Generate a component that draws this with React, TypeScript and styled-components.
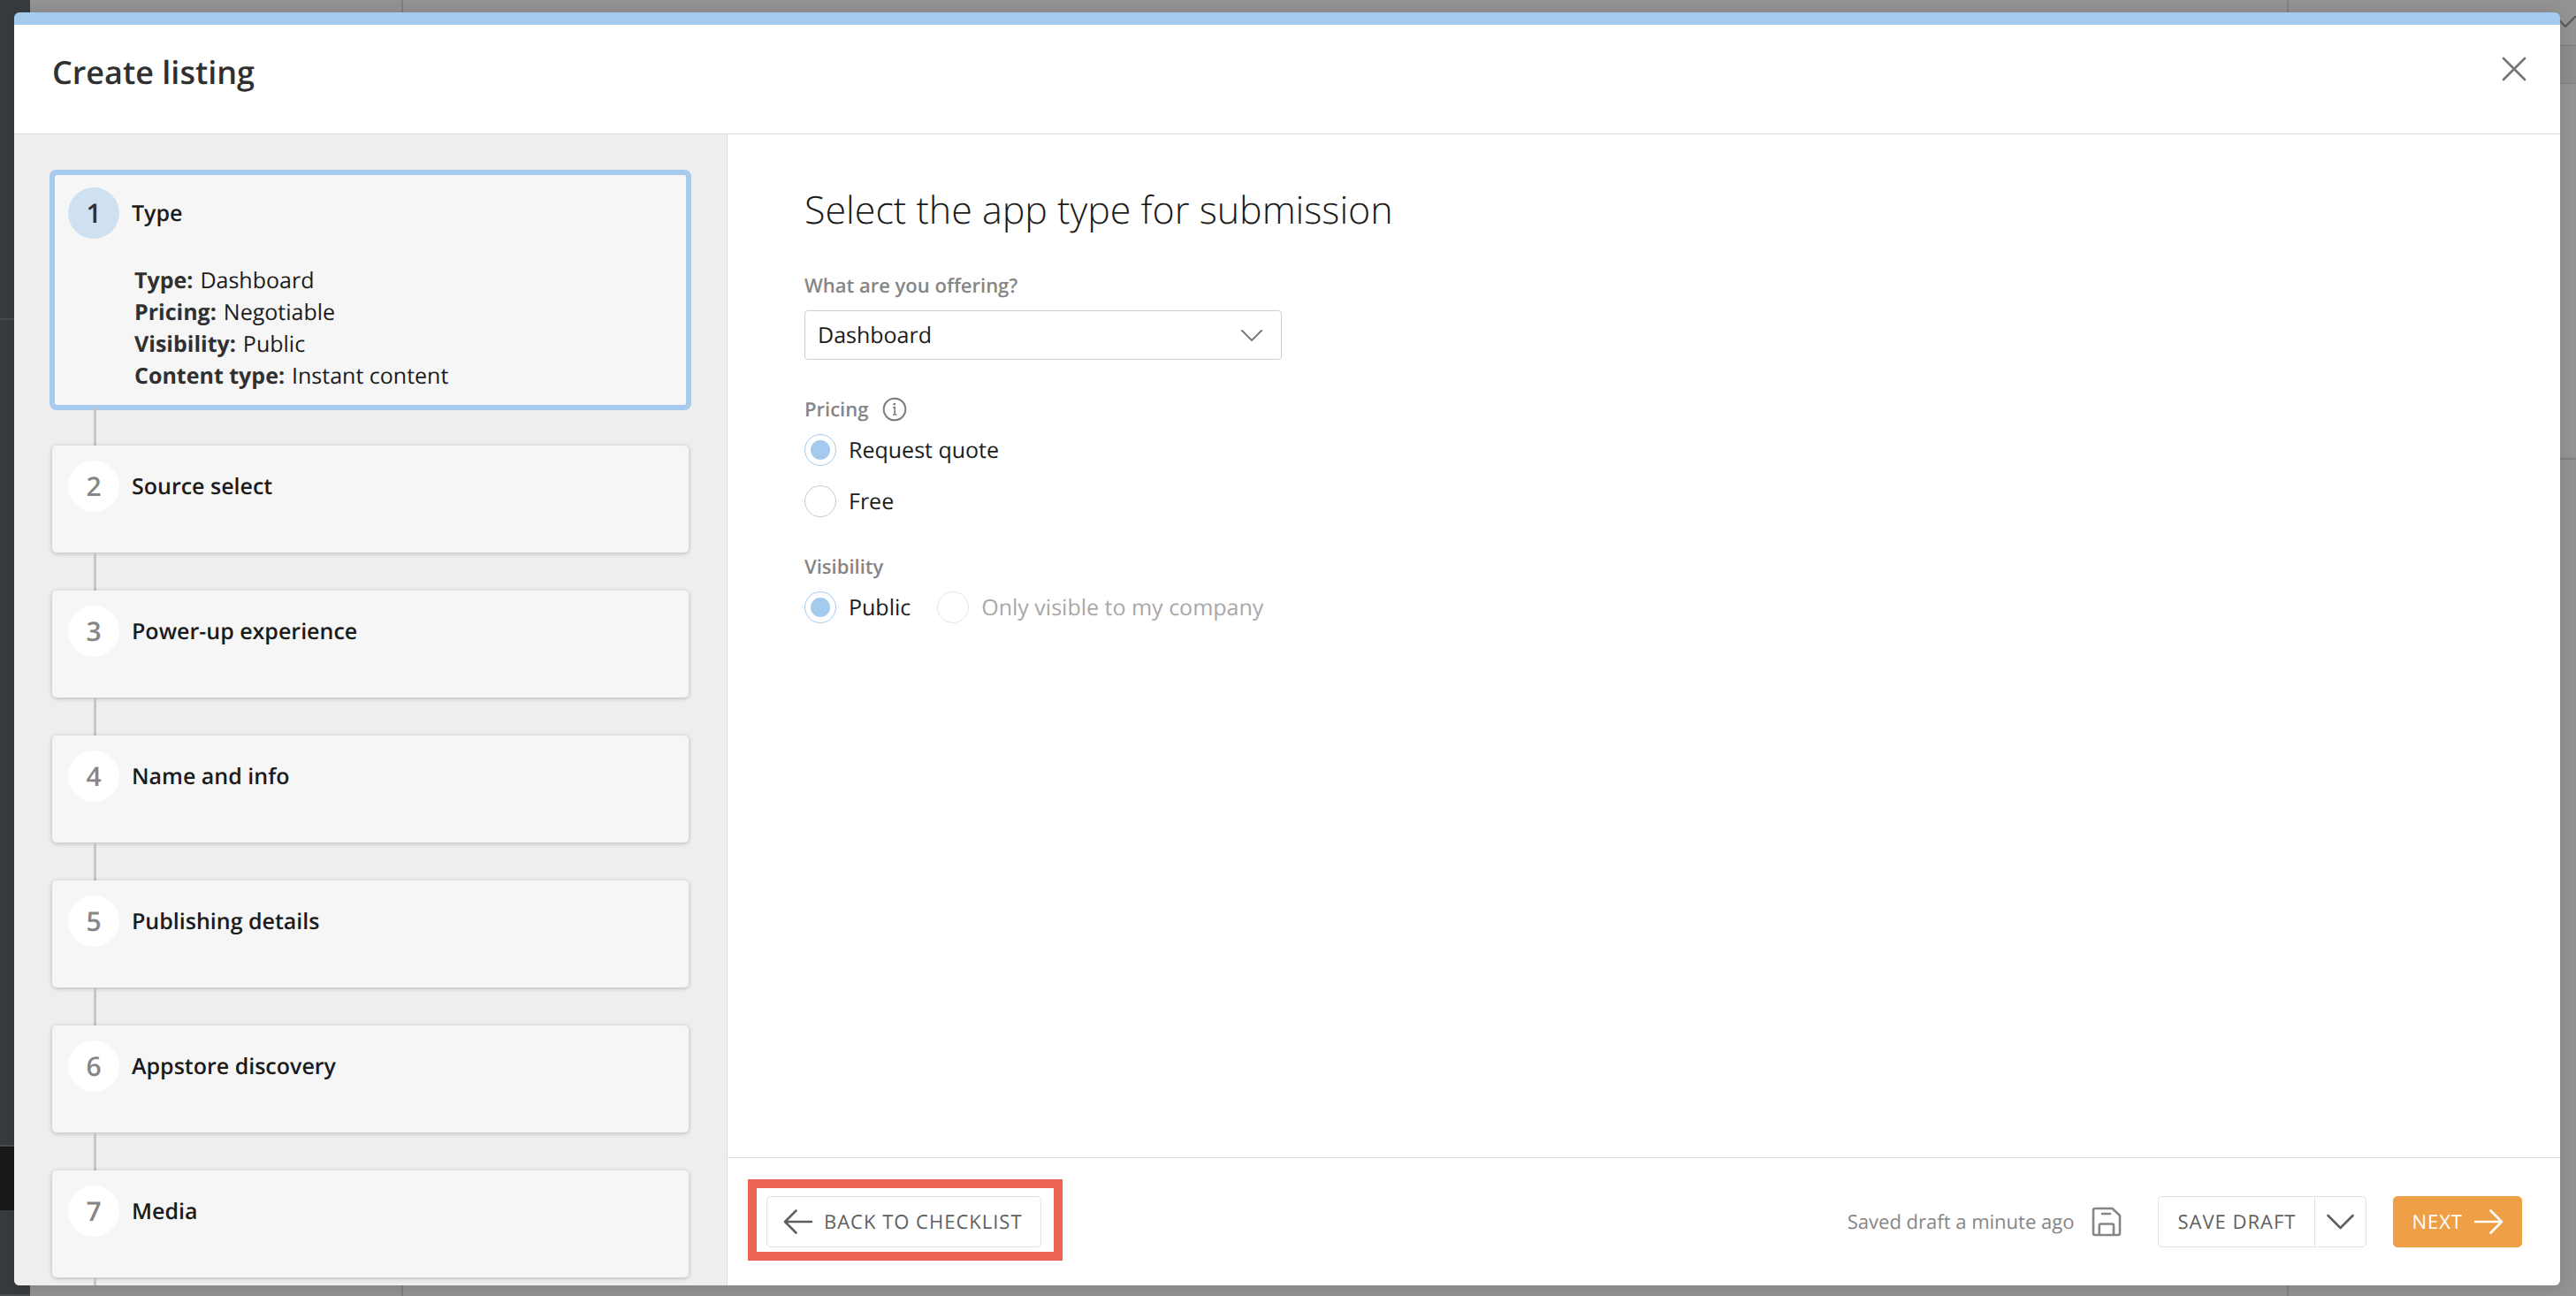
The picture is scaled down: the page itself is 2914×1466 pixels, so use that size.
import React, { useState } from "react";
import styled, { createGlobalStyle, css } from "styled-components";

const color = {
  accent: "#a4caed",
  accentSoft: "#cfe1f1",
  text: "#1b1b1b",
  strong: "#303030",
  muted: "#868686",
  button: "#606060",
  line: "#dcdcdc",
  orange: "#ef9f46",
  highlight: "#ec6453",
};

const GlobalStyle = createGlobalStyle`
  *, *::before, *::after { box-sizing: border-box; }
  body {
    margin: 0;
    font-family: "Open Sans", "Noto Sans", sans-serif;
    font-size: 25px;
    line-height: 36px;
    text-rendering: geometricPrecision;
    color: ${color.text};
  }
  button, select, input { font: inherit; color: inherit; margin: 0; text-rendering: inherit; }
  h1, h2, h3, p, dl, dd, ol, fieldset { margin: 0; padding: 0; }
`;

/* Dimmed page behind the dialog */

const Page = styled.div`
  position: relative;
  display: flex;
  height: 100vh;
  overflow: hidden;
  background: #949494;
`;

const NavRail = styled.div`
  width: 34px;
  display: flex;
  flex-direction: column;
  background: #383c3f;
`;

const NavSection = styled.div<{ $grow: number }>`
  flex: ${(p) => p.$grow} 0 0;
  border-bottom: 2px solid #4a4e51;
`;

const NavCurrent = styled.div`
  height: 72px;
  background: #191919;
`;

const ListPane = styled.div`
  width: 422px;
  border-right: 2px solid #7f7f7f;
`;

const ContentPane = styled.div`
  flex: 1;
`;

const SidePane = styled.div`
  width: 327px;
  border-left: 2px solid #828282;
  display: flex;
  flex-direction: column;
  align-items: flex-end;
`;

const PaneBar = styled.div`
  width: 100%;
  height: 52px;
  border-bottom: 1px solid #7b7b7b;
  display: flex;
  justify-content: flex-end;
  align-items: center;
  padding-bottom: 4px;
  color: #5c5c5c;
`;

const PaneTools = styled.div`
  width: 100%;
  height: 43px;
  background: #8e8e8e;
  border-bottom: 1px solid #868686;
`;

const PaneCard = styled.div`
  width: 100%;
  height: 425px;
  background: #969696;
  border-bottom: 2px solid #828282;
`;

/* Dialog */

const Overlay = styled.div`
  position: absolute;
  inset: 0;
  display: flex;
  padding: 14px 18px 12px 16px;
`;

const Dialog = styled.section`
  flex: 1;
  min-width: 0;
  display: flex;
  flex-direction: column;
  overflow: hidden;
  border-top: 14px solid ${color.accent};
  border-radius: 6px;
  background: #fff;
  box-shadow: 0 2px 24px rgba(0, 0, 0, 0.14);
`;

const Header = styled.header`
  display: flex;
  justify-content: space-between;
  align-items: flex-start;
  padding: 28px 36px 45px 43px;
  border-bottom: 1px solid ${color.line};
`;

const Title = styled.h1`
  padding-top: 2px;
  font-size: 36px;
  line-height: 48px;
  font-weight: 600;
  color: ${color.strong};
`;

const CloseButton = styled.button`
  display: flex;
  padding: 6px 0;
  border: 0;
  background: none;
  color: #757575;
  cursor: pointer;
`;

const Body = styled.div`
  flex: 1;
  min-height: 0;
  display: flex;
`;

/* Steps */

const Sidebar = styled.nav`
  flex: 0 0 807px;
  overflow: hidden;
  padding: 43px 43px 0;
  background: #eeeeee;
  border-right: 1px solid ${color.line};
`;

const StepList = styled.ol`
  list-style: none;
`;

const StepCard = styled.div<{ $active: boolean }>`
  min-height: 121px;
  padding: 17px 18px 18px;
  border-radius: 5px;
  background: #f6f6f6;
  box-shadow: 0 1px 5px rgba(0, 0, 0, 0.24);
  ${(p) =>
    p.$active &&
    css`
      box-shadow: 0 0 0 3px ${color.accent}, inset 0 0 0 3px ${color.accent};
    `}
`;

const StepButton = styled.button`
  display: flex;
  align-items: center;
  gap: 14px;
  width: 100%;
  padding: 0;
  border: 0;
  background: none;
  text-align: left;
  font-weight: 600;
  cursor: pointer;
`;

const StepNumber = styled.span<{ $active: boolean }>`
  display: flex;
  align-items: center;
  justify-content: center;
  width: 58px;
  height: 58px;
  border-radius: 50%;
  font-size: 30px;
  background: ${(p) => (p.$active ? color.accentSoft : "#fff")};
  color: ${(p) => (p.$active ? color.strong : color.muted)};
`;

const Connector = styled.div`
  width: 3px;
  height: 43px;
  margin-left: 47px;
  background: #c6c6c6;
`;

const Summary = styled.dl`
  margin: 29px 0 0 75px;
`;

const SummaryRow = styled.div`
  display: flex;
  gap: 8px;
`;

const Term = styled.dt`
  font-weight: 700;
  color: ${color.strong};
`;

/* Form */

const Main = styled.main`
  flex: 1;
  min-width: 0;
  display: flex;
  flex-direction: column;
`;

const Form = styled.form`
  flex: 1;
  display: flex;
  flex-direction: column;
  align-items: flex-start;
  gap: 41px;
  padding: 55px 87px;
`;

const FormTitle = styled.h2`
  font-size: 43px;
  line-height: 60px;
  font-weight: 300;
`;

const Field = styled.div`
  display: flex;
  flex-direction: column;
  gap: 13px;
`;

const FieldLabel = styled.label`
  font-size: 22px;
  line-height: 30px;
  font-weight: 600;
  color: ${color.muted};
`;

const LabelRow = styled.div`
  display: flex;
  align-items: center;
  gap: 16px;
  height: 30px;
`;

const InfoButton = styled.button`
  display: flex;
  padding: 0;
  border: 0;
  background: none;
  color: #7b7b7b;
  cursor: pointer;
`;

const SelectBox = styled.div`
  position: relative;
  width: 540px;
`;

const Select = styled.select`
  appearance: none;
  display: block;
  width: 100%;
  height: 56px;
  padding: 0 60px 0 14px;
  border: 1px solid #cfcfcf;
  border-radius: 4px;
  background: #fff;
`;

const SelectArrow = styled.span`
  position: absolute;
  right: 22px;
  top: 22px;
  display: flex;
  color: #7b7b7b;
  pointer-events: none;
`;

const Options = styled.div<{ $inline?: boolean }>`
  display: flex;
  flex-direction: ${(p) => (p.$inline ? "row" : "column")};
  gap: ${(p) => (p.$inline ? "30px" : "22px")};
`;

const Option = styled.label<{ $disabled?: boolean }>`
  display: flex;
  align-items: center;
  gap: 14px;
  color: ${(p) => (p.$disabled ? "#a8a8a8" : color.text)};
`;

const Radio = styled.input`
  appearance: none;
  width: 36px;
  height: 36px;
  border: 1px solid #c9c9c9;
  border-radius: 50%;
  display: grid;
  place-items: center;

  &:checked {
    border-color: ${color.accent};
  }
  &:checked::before {
    content: "";
    width: 22px;
    height: 22px;
    border-radius: 50%;
    background: ${color.accent};
  }
  &:disabled {
    border-color: #e6e6e6;
  }
`;

/* Footer */

const Footer = styled.footer`
  display: flex;
  align-items: center;
  justify-content: space-between;
  height: 145px;
  padding: 0 43px 0 44px;
  border-top: 1px solid ${color.line};
`;

const Button = styled.button<{ $primary?: boolean }>`
  display: flex;
  align-items: center;
  gap: 12px;
  height: 58px;
  padding: 0 20px;
  border: 1px solid ${(p) => (p.$primary ? color.orange : "#e2e2e2")};
  border-radius: 5px;
  background: ${(p) => (p.$primary ? color.orange : "#fff")};
  color: ${(p) => (p.$primary ? "#fff" : color.button)};
  font-size: 22px;
  line-height: 30px;
  font-weight: 500;
  letter-spacing: 1px;
  white-space: nowrap;
  cursor: pointer;
`;

const Highlight = styled.div`
  position: relative;

  ${Button} {
    padding: 0 20px 0 18px;
  }

  &::after {
    content: "";
    position: absolute;
    inset: -19px -24px -15px -21px;
    border: 10px solid ${color.highlight};
    pointer-events: none;
  }
`;

const Actions = styled.div`
  display: flex;
  align-items: center;
`;

const DraftStatus = styled.p`
  display: flex;
  align-items: center;
  gap: 20px;
  margin-right: 41px;
  font-size: 22px;
  line-height: 30px;
  color: ${color.muted};
`;

const SplitButton = styled.div`
  display: flex;
  margin-right: 30px;

  ${Button}:first-child {
    padding: 0 21px;
    border-right: 0;
    border-radius: 5px 0 0 5px;
  }
  ${Button}:last-child {
    padding: 0 13px;
    border-radius: 0 5px 5px 0;
  }
`;

type StrokeProps = {
  width: number;
  height: number;
  d: string;
  stroke?: number;
};

const Stroke = ({ width, height, d, stroke = 2 }: StrokeProps) => (
  <svg
    width={width}
    height={height}
    viewBox={`0 0 ${width} ${height}`}
    fill="none"
    stroke="currentColor"
    strokeWidth={stroke}
    strokeLinecap="round"
    strokeLinejoin="round"
    aria-hidden="true"
  >
    <path d={d} />
  </svg>
);

const steps = [
  "Type",
  "Source select",
  "Power-up experience",
  "Name and info",
  "Publishing details",
  "Appstore discovery",
  "Media",
];

const summary = [
  ["Type:", "Dashboard"],
  ["Pricing:", "Negotiable"],
  ["Visibility:", "Public"],
  ["Content type:", "Instant content"],
];

export default function App() {
  const [pricing, setPricing] = useState("quote");

  return (
    <Page>
      <GlobalStyle />
      <NavRail aria-hidden="true">
        <NavSection $grow={362} />
        <NavSection $grow={937} />
        <NavCurrent />
        <NavSection $grow={95} />
      </NavRail>
      <ListPane />
      <ContentPane />
      <SidePane aria-hidden="true">
        <PaneBar>
          <Stroke width={28} height={18} d="M3 2L16 15L27 4" stroke={2.4} />
        </PaneBar>
        <PaneTools />
        <PaneCard />
      </SidePane>

      <Overlay>
        <Dialog role="dialog" aria-labelledby="dialog-title">
          <Header>
            <Title id="dialog-title">Create listing</Title>
            <CloseButton type="button" aria-label="Close">
              <Stroke width={32} height={32} d="M4 4L28 28M28 4L4 28" stroke={2.6} />
            </CloseButton>
          </Header>

          <Body>
            <Sidebar aria-label="Steps">
              <StepList>
                {steps.map((name, i) => (
                  <li key={name}>
                    <StepCard $active={i === 0}>
                      <StepButton type="button" aria-current={i === 0 ? "step" : undefined}>
                        <StepNumber $active={i === 0}>{i + 1}</StepNumber>
                        {name}
                      </StepButton>
                      {i === 0 && (
                        <Summary>
                          {summary.map(([term, value]) => (
                            <SummaryRow key={term}>
                              <Term>{term}</Term>
                              <dd>{value}</dd>
                            </SummaryRow>
                          ))}
                        </Summary>
                      )}
                    </StepCard>
                    <Connector />
                  </li>
                ))}
              </StepList>
            </Sidebar>

            <Main>
              <Form>
                <FormTitle>Select the app type for submission</FormTitle>

                <Field>
                  <FieldLabel htmlFor="offering">What are you offering?</FieldLabel>
                  <SelectBox>
                    <Select id="offering" defaultValue="Dashboard">
                      <option>Dashboard</option>
                    </Select>
                    <SelectArrow>
                      <Stroke width={24} height={14} d="M1 1L12 12L23 1" />
                    </SelectArrow>
                  </SelectBox>
                </Field>

                <Field role="radiogroup" aria-labelledby="pricing-label">
                  <LabelRow>
                    <FieldLabel as="span" id="pricing-label">Pricing</FieldLabel>
                    <InfoButton type="button" aria-label="About pricing">
                      <svg width="28" height="28" viewBox="0 0 28 28" fill="none" stroke="currentColor" strokeWidth="2">
                        <circle cx="14" cy="14" r="12.3" />
                        <path d="M12 11.8h2.2v8.2M12 20h4.4" strokeWidth="1.6" />
                        <circle cx="13.8" cy="8.2" r="1.4" fill="currentColor" stroke="none" />
                      </svg>
                    </InfoButton>
                  </LabelRow>
                  <Options>
                    <Option>
                      <Radio
                        type="radio"
                        name="pricing"
                        checked={pricing === "quote"}
                        onChange={() => setPricing("quote")}
                      />
                      Request quote
                    </Option>
                    <Option>
                      <Radio
                        type="radio"
                        name="pricing"
                        checked={pricing === "free"}
                        onChange={() => setPricing("free")}
                      />
                      Free
                    </Option>
                  </Options>
                </Field>

                <Field role="radiogroup" aria-labelledby="visibility-label">
                  <FieldLabel as="span" id="visibility-label">Visibility</FieldLabel>
                  <Options $inline>
                    <Option>
                      <Radio type="radio" name="visibility" defaultChecked />
                      Public
                    </Option>
                    <Option $disabled>
                      <Radio type="radio" name="visibility" disabled />
                      Only visible to my company
                    </Option>
                  </Options>
                </Field>
              </Form>

              <Footer>
                <Highlight>
                  <Button type="button">
                    <Stroke width={34} height={30} d="M2 15H32M14.5 2.5L2 15L14.5 27.5" stroke={2.6} />
                    BACK TO CHECKLIST
                  </Button>
                </Highlight>
                <Actions>
                  <DraftStatus>
                    Saved draft a minute ago
                    <Stroke
                      width={34}
                      height={34}
                      stroke={2.6}
                      d="M4 2H23.5L32 10V30Q32 32 30 32H4Q2 32 2 30V4Q2 2 4 2ZM8.8 32V21Q8.8 19.5 10.3 19.5H23.3Q25 19.5 25 21V32M12 8H21"
                    />
                  </DraftStatus>
                  <SplitButton>
                    <Button type="button">SAVE DRAFT</Button>
                    <Button type="button" aria-label="More save options">
                      <Stroke width={31} height={18} d="M1.5 2L15.5 16L29.5 2" stroke={2.6} />
                    </Button>
                  </SplitButton>
                  <Button type="button" $primary>
                    NEXT
                    <Stroke width={34} height={30} d="M2 15H32M19.5 2.5L32 15L19.5 27.5" stroke={2.6} />
                  </Button>
                </Actions>
              </Footer>
            </Main>
          </Body>
        </Dialog>
      </Overlay>
    </Page>
  );
}
